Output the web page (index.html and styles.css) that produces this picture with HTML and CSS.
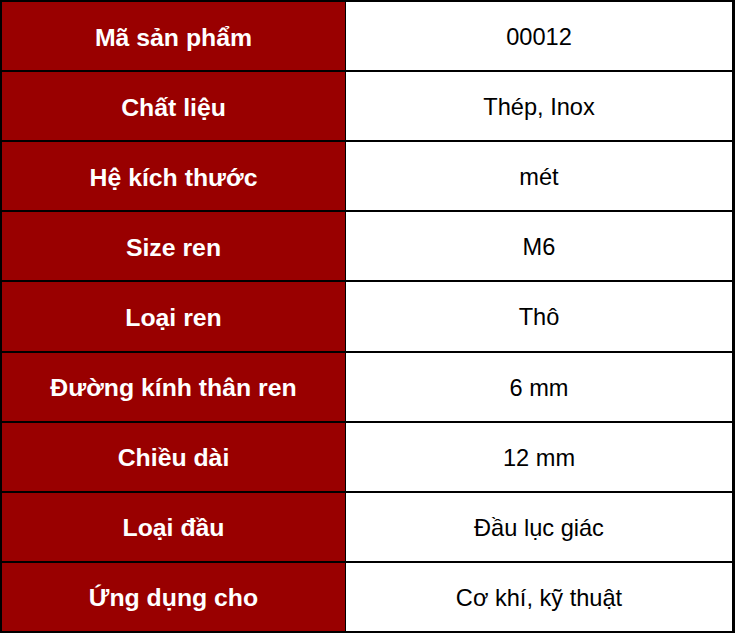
FILE: index.html
```html
<!DOCTYPE html>
<html lang="vi">
<head>
<meta charset="utf-8">
<title>Thông số</title>
<link rel="stylesheet" href="styles.css">
</head>
<body>
<div class="spec">
  <div class="k">Mã sản phẩm</div><div class="v">00012</div>
  <div class="k">Chất liệu</div><div class="v">Thép, Inox</div>
  <div class="k">Hệ kích thước</div><div class="v">mét</div>
  <div class="k">Size ren</div><div class="v">M6</div>
  <div class="k">Loại ren</div><div class="v">Thô</div>
  <div class="k">Đường kính thân ren</div><div class="v">6 mm</div>
  <div class="k">Chiều dài</div><div class="v">12 mm</div>
  <div class="k">Loại đầu</div><div class="v">Đầu lục giác</div>
  <div class="k">Ứng dụng cho</div><div class="v">Cơ khí, kỹ thuật</div>
</div>
</body>
</html>
```
FILE: styles.css
```css
html, body {
  margin: 0;
  padding: 0;
  background: #fff;
}
.spec {
  box-sizing: border-box;
  width: 735px;
  height: 633px;
  border: 2px solid #000;
  border-right-width: 3px;
  background: #000;
  display: grid;
  grid-template-columns: 343px 1fr;
  grid-template-rows: repeat(9, 1fr);
  column-gap: 1px;
  row-gap: 2px;
  font-family: "Liberation Sans", Arial, sans-serif;
}
.k, .v {
  display: flex;
  align-items: center;
  justify-content: center;
  padding-top: 3px;
}
.k {
  background: #990000;
  color: #fff;
  font-weight: bold;
  font-size: 24.8px;
}
.v {
  background: #fff;
  color: #000;
  font-size: 23.6px;
}
```
